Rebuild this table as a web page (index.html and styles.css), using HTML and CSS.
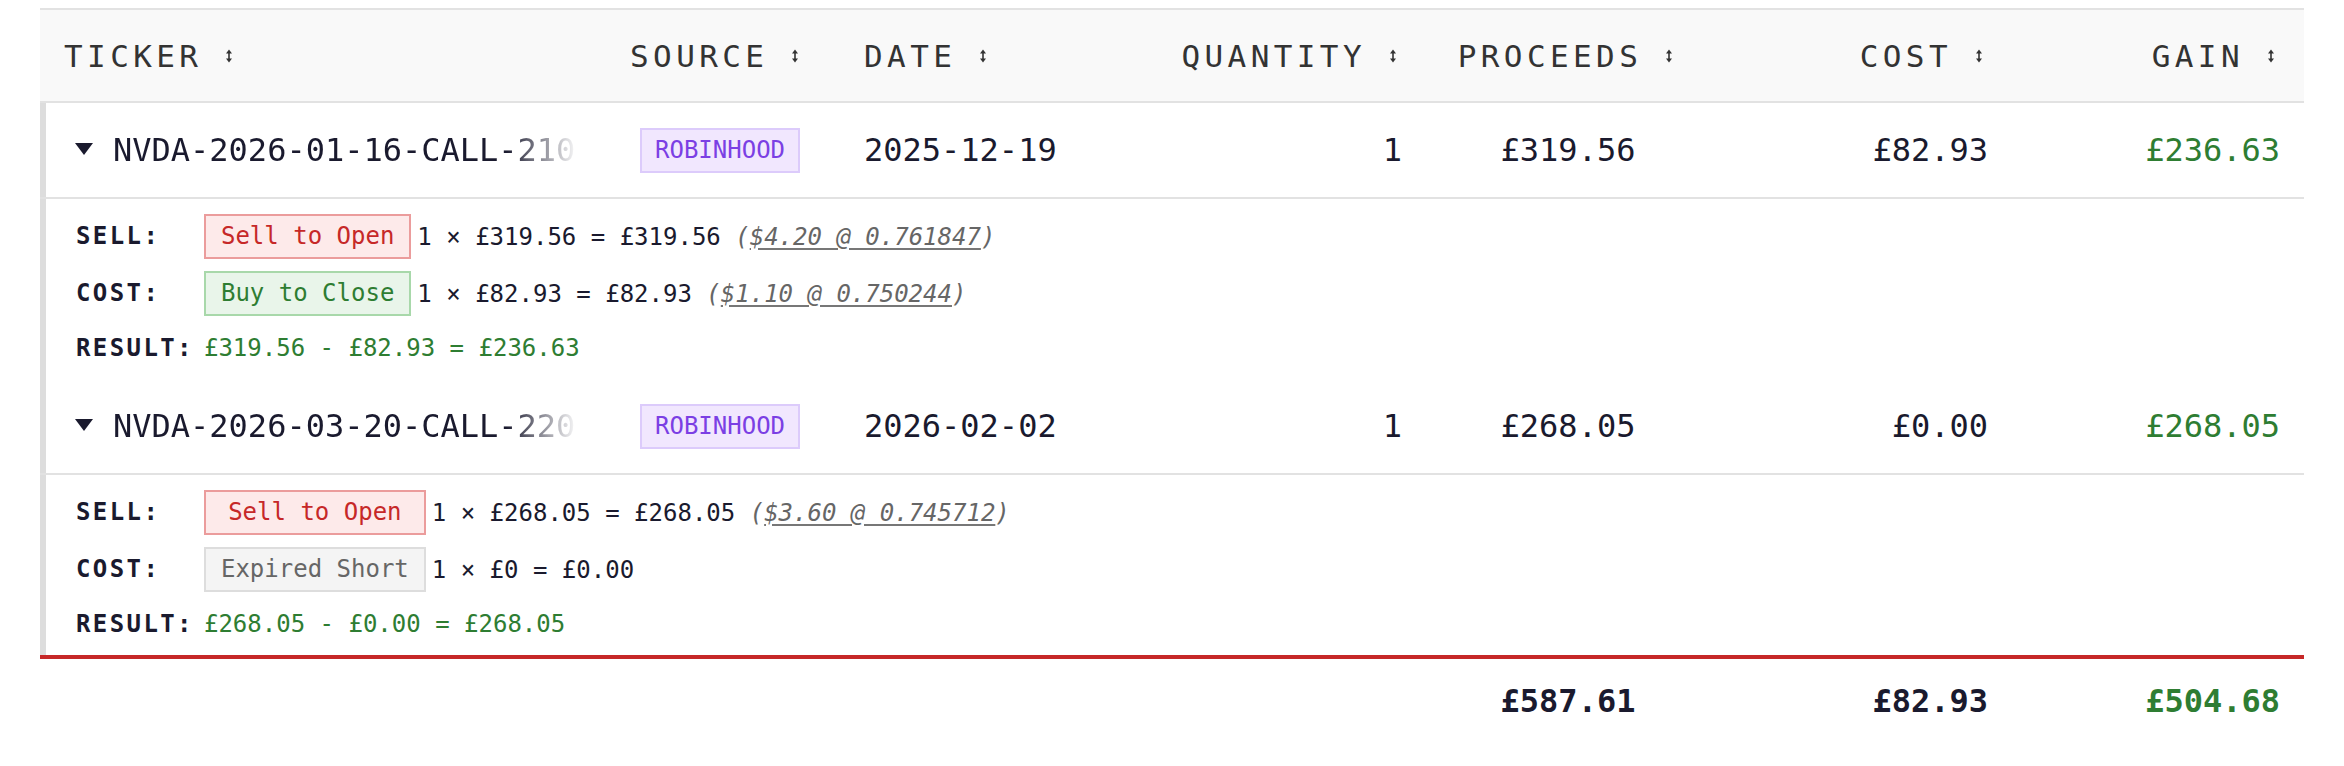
FILE: index.html
```html
<!DOCTYPE html>
<html lang="en">
<head>
<meta charset="utf-8">
<title>Gains</title>
<link rel="stylesheet" href="styles.css">
</head>
<body>
<div class="table">
  <div class="grid head">
    <div class="cell c-left first"><span>TICKER</span><svg class="sort" viewBox="0 0 8 14" width="8" height="14"><path d="M4 2V12" stroke="#333" stroke-width="1.6"/><path d="M1 4.5L4 0.5L7 4.5Z M1 9.5L4 13.5L7 9.5Z" fill="#333"/></svg></div>
    <div class="cell c-left"><span>SOURCE</span><svg class="sort" viewBox="0 0 8 14" width="8" height="14"><path d="M4 2V12" stroke="#333" stroke-width="1.6"/><path d="M1 4.5L4 0.5L7 4.5Z M1 9.5L4 13.5L7 9.5Z" fill="#333"/></svg></div>
    <div class="cell c-left"><span>DATE</span><svg class="sort" viewBox="0 0 8 14" width="8" height="14"><path d="M4 2V12" stroke="#333" stroke-width="1.6"/><path d="M1 4.5L4 0.5L7 4.5Z M1 9.5L4 13.5L7 9.5Z" fill="#333"/></svg></div>
    <div class="cell c-right"><span>QUANTITY</span><svg class="sort" viewBox="0 0 8 14" width="8" height="14"><path d="M4 2V12" stroke="#333" stroke-width="1.6"/><path d="M1 4.5L4 0.5L7 4.5Z M1 9.5L4 13.5L7 9.5Z" fill="#333"/></svg></div>
    <div class="cell c-center"><span>PROCEEDS</span><svg class="sort" viewBox="0 0 8 14" width="8" height="14"><path d="M4 2V12" stroke="#333" stroke-width="1.6"/><path d="M1 4.5L4 0.5L7 4.5Z M1 9.5L4 13.5L7 9.5Z" fill="#333"/></svg></div>
    <div class="cell c-right"><span>COST</span><svg class="sort" viewBox="0 0 8 14" width="8" height="14"><path d="M4 2V12" stroke="#333" stroke-width="1.6"/><path d="M1 4.5L4 0.5L7 4.5Z M1 9.5L4 13.5L7 9.5Z" fill="#333"/></svg></div>
    <div class="cell c-right"><span>GAIN</span><svg class="sort" viewBox="0 0 8 14" width="8" height="14"><path d="M4 2V12" stroke="#333" stroke-width="1.6"/><path d="M1 4.5L4 0.5L7 4.5Z M1 9.5L4 13.5L7 9.5Z" fill="#333"/></svg></div>
  </div>

  <div class="grid row">
    <div class="cell c-left first ticker-cell"><svg class="caret" viewBox="0 0 18 12" width="18" height="12"><path d="M0 0H18L9 12Z" fill="#1a1a2e"/></svg><span class="ticker">NVDA-2026-01-16-CALL-210.0</span></div>
    <div class="cell c-left"><span class="source">ROBINHOOD</span></div>
    <div class="cell c-left">2025-12-19</div>
    <div class="cell c-right">1</div>
    <div class="cell c-center">£319.56</div>
    <div class="cell c-right">£82.93</div>
    <div class="cell c-right gain">£236.63</div>
  </div>
  <div class="detail">
    <div class="label">SELL:</div>
    <div class="badge b-sell">Sell to Open</div>
    <div class="calc">1 × £319.56 = £319.56 <span class="fx">(<u>$4.20 @ 0.761847</u>)</span></div>
    <div class="label">COST:</div>
    <div class="badge b-buy">Buy to Close</div>
    <div class="calc">1 × £82.93 = £82.93 <span class="fx">(<u>$1.10 @ 0.750244</u>)</span></div>
    <div class="label">RESULT:</div>
    <div class="result">£319.56 - £82.93 = £236.63</div>
  </div>

  <div class="grid row">
    <div class="cell c-left first ticker-cell"><svg class="caret" viewBox="0 0 18 12" width="18" height="12"><path d="M0 0H18L9 12Z" fill="#1a1a2e"/></svg><span class="ticker">NVDA-2026-03-20-CALL-220.0</span></div>
    <div class="cell c-left"><span class="source">ROBINHOOD</span></div>
    <div class="cell c-left">2026-02-02</div>
    <div class="cell c-right">1</div>
    <div class="cell c-center">£268.05</div>
    <div class="cell c-right">£0.00</div>
    <div class="cell c-right gain">£268.05</div>
  </div>
  <div class="detail">
    <div class="label">SELL:</div>
    <div class="badge b-sell">Sell to Open</div>
    <div class="calc">1 × £268.05 = £268.05 <span class="fx">(<u>$3.60 @ 0.745712</u>)</span></div>
    <div class="label">COST:</div>
    <div class="badge b-exp">Expired Short</div>
    <div class="calc">1 × £0 = £0.00</div>
    <div class="label">RESULT:</div>
    <div class="result">£268.05 - £0.00 = £268.05</div>
  </div>

  <div class="grid foot">
    <div class="cell"></div>
    <div class="cell"></div>
    <div class="cell"></div>
    <div class="cell"></div>
    <div class="cell c-center">£587.61</div>
    <div class="cell c-right">£82.93</div>
    <div class="cell c-right gain">£504.68</div>
  </div>
</div>
</body>
</html>
```

FILE: styles.css
```css
html, body {
  margin: 0;
  padding: 0;
  background: #ffffff;
}

body {
  font-family: "DejaVu Sans Mono", "Liberation Mono", monospace;
  color: #1a1a2e;
}

.table {
  margin: 8px 40px 0;
}

.grid {
  display: grid;
  grid-template-columns: 566px 234px 310px 276px 284px 302px 292px;
}

.cell {
  display: flex;
  align-items: center;
  padding: 0 24px;
  min-width: 0;
  white-space: nowrap;
}

.c-left { justify-content: flex-start; }
.c-right { justify-content: flex-end; }
.c-center { justify-content: center; }

.head {
  background: #f9f9f9;
  border-top: 2px solid #e2e2e2;
  border-bottom: 2px solid #e2e2e2;
  height: 91px;
  font-size: 31px;
  letter-spacing: 4.4px;
  color: #333333;
}

.sort {
  margin-left: 23px;
  margin-right: 5px;
  flex: none;
}

.row {
  height: 94px;
  border-bottom: 2px solid #e2e2e2;
  box-shadow: inset 6px 0 0 #dddddd;
  font-size: 32px;
}

.ticker-cell {
  padding-right: 28px;
}

.caret {
  flex: none;
  margin-left: 11px;
  margin-right: 20px;
  margin-bottom: 2px;
}

.ticker {
  flex: 1;
  min-width: 0;
  overflow: hidden;
  white-space: nowrap;
  -webkit-mask-image: linear-gradient(90deg, #000 calc(100% - 72px), transparent 100%);
  mask-image: linear-gradient(90deg, #000 calc(100% - 72px), transparent 100%);
}

.source {
  display: inline-block;
  margin-left: 10px;
  font-size: 24px;
  line-height: 41px;
  padding: 0 13px;
  color: #7b3fe4;
  background: #f1e7fe;
  border: 2px solid #dccbfb;
}

.gain,
.result {
  color: #2e7d32;
}

.detail {
  display: grid;
  grid-template-columns: max-content max-content 1fr;
  align-items: center;
  row-gap: 12px;
  padding: 15px 0 11px 36px;
  box-shadow: inset 6px 0 0 #dddddd;
  font-size: 24px;
}

.label {
  font-weight: bold;
  letter-spacing: 2.4px;
  margin-right: 10px;
  height: 45px;
  line-height: 45px;
}

.detail .label:nth-last-child(2) {
  height: 40px;
  line-height: 40px;
}

.badge {
  line-height: 41px;
  padding: 0 15px;
  border: 2px solid;
  text-align: center;
}

.b-sell {
  color: #c62828;
  background: #fdeaea;
  border-color: #eb9c9c;
}

.b-buy {
  color: #2e7d32;
  background: #e9f5ea;
  border-color: #a8d8aa;
}

.b-exp {
  color: #666666;
  background: #f4f4f4;
  border-color: #dddddd;
}

.calc {
  padding-left: 6px;
  white-space: nowrap;
}

.fx {
  color: #666666;
  font-style: italic;
}

.fx u {
  text-decoration-color: #777777;
  text-underline-offset: 3px;
}

.result {
  grid-column: 2 / 4;
  line-height: 40px;
}

.foot {
  height: 84px;
  border-top: 4px solid #c62828;
  font-size: 32px;
  font-weight: bold;
}
```
